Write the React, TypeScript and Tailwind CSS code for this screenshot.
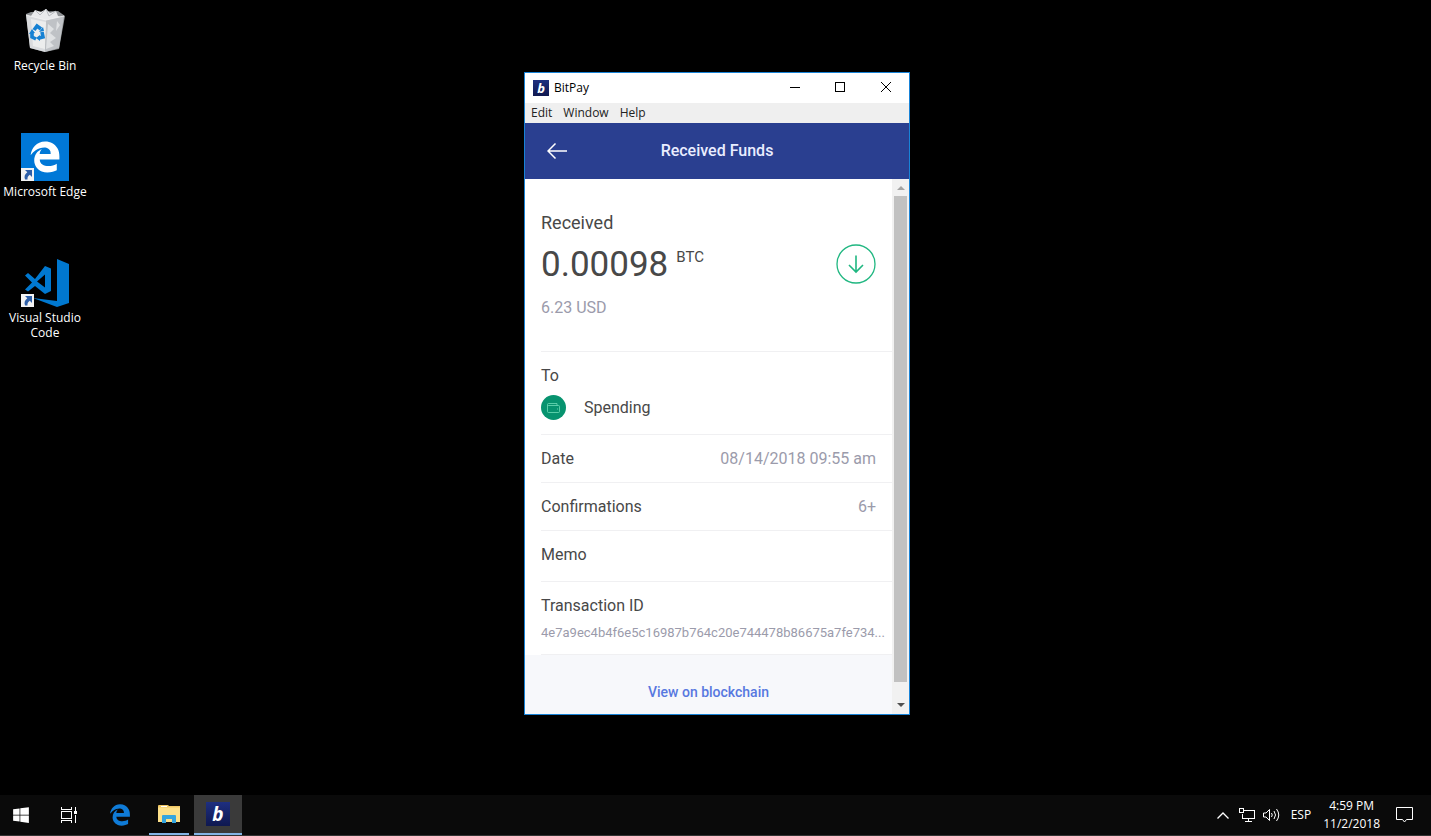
import type { ReactNode } from 'react'
import { FaEdgeLegacy, FaWindows } from 'react-icons/fa6'

const TX_ID = '4e7a9ec4b4f6e5c16987b764c20e744478b86675a7fe734...'

function RecycleBinIcon() {
  return (
    <svg viewBox="0 0 48 48" className="h-12 w-12" aria-hidden="true">
      <path d="M5 7l5-2 27-1 7 5-6 33-14 3-15-4z" fill="#8d9093" />
      <path d="M10 9l4-6 6 2 5-3 4 4 6-2 2 5 4 1-5 7H12z" fill="#e9eaec" />
      <path d="M14 3l5 5 6-6 3 7 7-5" fill="none" stroke="#b9bcc0" />
      <path d="M5 8l20 5-1 32-15-4z" fill="#d9dbde" />
      <path d="M25 13l18-4-5 32-14 4z" fill="#bfc2c6" />
      <path d="M10 12l15 3-1 27-12-3z" fill="#eceded" />
      <path d="M27 17l6 5-4 4 6 5-6 4 4 4-8 3zM36 14l3 4-4 6z" fill="#dfe1e3" />
      <path d="M5 8l20 5 18-4" fill="none" stroke="#f5f5f5" strokeWidth="0.8" />
      <g fill="none" stroke="#1681d3" strokeWidth="3.6">
        <path d="M13 23l3-4 4 3" />
        <path d="M21 25l1 5-4 1" />
        <path d="M15 32l-4-2 0-5" />
      </g>
      <path d="M18 25l5-1-1-4zM19 28v6l-4-3zM8 27l3-5 3 4z" fill="#1681d3" />
    </svg>
  )
}

function VsCodeIcon() {
  return (
    <svg viewBox="0 0 48 48" className="h-12 w-12" fill="#0078d0" aria-hidden="true">
      <path d="M36 0l12 5v39l-12 4-24-9 24 3z" />
      <path
        fillRule="evenodd"
        d="M24 7l6 2.500v22.500l-6 3-10-8-7 5.500-3-2 7-7-7-7 3-2.500 7 6zM24 15.500l-8 7 8 6z"
      />
    </svg>
  )
}

function EdgeTile() {
  return (
    <span className="flex h-12 w-12 items-center justify-center bg-[#0078d7]">
      <FaEdgeLegacy className="h-8 w-8 text-white" />
    </span>
  )
}

function ShortcutBadge() {
  return (
    <svg viewBox="0 0 13 13" className="absolute bottom-0 left-0 h-[13px] w-[13px]" aria-hidden="true">
      <path d="M0 0h13v13H0z" fill="#f3f3f3" />
      <path d="M4 2h7v7L8.800 6.800C7 8 6.300 9.300 6.500 11.500H4C2.800 8.500 4 6 6.300 4.300z" fill="#2e5fa8" />
    </svg>
  )
}

function DesktopIcon({ label, shortcut, children }: { label: string; shortcut?: boolean; children: ReactNode }) {
  return (
    <button type="button" className="flex h-[126px] flex-col items-center gap-[3px] text-white">
      <span className="relative block h-12 w-12">
        {children}
        {shortcut && <ShortcutBadge />}
      </span>
      <span className="text-[12px] leading-[15px]">{label}</span>
    </button>
  )
}

function WindowControls() {
  return (
    <div className="ml-auto flex h-full pb-[2px]">
      <button type="button" aria-label="Minimize" className="flex w-[44px] items-center justify-center">
        <svg viewBox="0 0 10 10" className="h-[10px] w-[10px]" stroke="#000" shapeRendering="crispEdges">
          <path d="M0 5.500h10" />
        </svg>
      </button>
      <button type="button" aria-label="Maximize" className="flex w-[46px] items-center justify-center">
        <svg viewBox="0 0 10 10" className="h-[10px] w-[10px]" stroke="#000" fill="none" shapeRendering="crispEdges">
          <path d="M.5.5h9v9h-9z" />
        </svg>
      </button>
      <button type="button" aria-label="Close" className="flex w-[46px] items-center justify-center">
        <svg viewBox="0 0 10 10" className="h-[10px] w-[10px]" stroke="#000">
          <path d="M0 0l10 10M10 0L0 10" />
        </svg>
      </button>
    </div>
  )
}

function ScrollBar() {
  return (
    <div className="flex w-[17px] shrink-0 flex-col items-center bg-[#f1f1f1]" aria-hidden="true">
      <span className="flex h-[17px] items-center">
        <svg viewBox="0 0 8 4" className="h-1 w-2" fill="#a3a3a3">
          <path d="M0 4l4-4 4 4z" />
        </svg>
      </span>
      <span className="w-[13px] flex-1 bg-[#c1c1c1]" />
      <span className="h-[14px]" />
      <span className="flex h-[18px] items-center">
        <svg viewBox="0 0 8 4" className="h-1 w-2" fill="#505050">
          <path d="M0 0l4 4 4-4z" />
        </svg>
      </span>
    </div>
  )
}

function Row({ label, value }: { label: string; value: string }) {
  return (
    <div className="ml-4 flex h-12 items-center justify-between border-b border-[#f0f0f2] pr-4">
      <dt>{label}</dt>
      <dd className="text-[#9b9bab]">{value}</dd>
    </div>
  )
}

function TransactionDetails() {
  return (
    <div className="flex min-w-0 flex-1 flex-col text-[16px] leading-6 text-[#484848]">
      <section className="ml-4 flex h-[173px] flex-col border-b border-[#f0f0f2] pt-8 pr-4">
        <h2 className="text-[18px] leading-6">Received</h2>
        <div className="flex h-[61px] items-start justify-between pt-2">
          <p className="flex items-start gap-2">
            <span className="text-[35px] leading-[44px]">0.00098</span>
            <span className="pt-[2px] text-[15px] leading-6">BTC</span>
          </p>
          <svg viewBox="0 0 40 40" className="mt-px h-10 w-10" fill="none" stroke="#20b781" aria-hidden="true">
            <circle cx="20" cy="20" r="19" strokeWidth="1.300" />
            <path d="M20 11.500v16M13 21l7 7 7-7" strokeWidth="1.600" />
          </svg>
        </div>
        <p className="text-[#9b9bab]">6.23 USD</p>
      </section>

      <dl>
        <div className="ml-4 flex h-[83px] flex-col gap-[7px] border-b border-[#f0f0f2] pt-3">
          <dt>To</dt>
          <dd className="flex items-center gap-[18px]">
            <span className="flex h-[25px] w-[25px] items-center justify-center rounded-full bg-[#07936f]">
              <svg viewBox="0 0 13 10" className="h-[10px] w-[13px]" fill="none" stroke="#6fdcb8" strokeWidth="0.800" aria-hidden="true">
                <path d="M.5 2v6.500q0 1 1 1h10q1 0 1-1v-5q0-1-1-1H1.500Q.5 2.500.5 1.500T1.500.5h8.500v2" />
                <path d="M10 6h.8" strokeWidth="1.200" />
              </svg>
            </span>
            Spending
          </dd>
        </div>
        <Row label="Date" value="08/14/2018 09:55 am" />
        <Row label="Confirmations" value="6+" />
        <div className="ml-4 h-[51px] border-b border-[#f0f0f2] pt-3">
          <dt>Memo</dt>
        </div>
        <div className="ml-4 h-[73px] border-b border-[#f0f0f2] pt-3">
          <dt>Transaction ID</dt>
          <dd className="pt-[3px] text-[13px] whitespace-nowrap text-[#9b9bab]">{TX_ID}</dd>
        </div>
      </dl>

      <div className="flex flex-1 items-start justify-center bg-[#f7f8fb] pt-[25px]">
        <a href="#blockchain" className="text-[14px] font-medium text-[#5878e0]">
          View on blockchain
        </a>
      </div>
    </div>
  )
}

function BitPayWindow() {
  return (
    <main className="absolute top-[72px] left-[524px] flex h-[643px] w-[386px] flex-col border border-[#1883d7] bg-white">
      <div className="flex h-[30px] items-center pl-2 text-[12px] text-black">
        <span className="flex h-4 w-4 items-center justify-center bg-linear-to-b from-[#1e2f80] to-[#0f1850] font-['Open_Sans'] text-[13px] leading-4 font-bold text-white italic">
          b
        </span>
        <span className="pl-[5px]">BitPay</span>
        <WindowControls />
      </div>
      <nav className="flex h-5 items-center gap-[11px] bg-[#efefef] pl-[6px] text-[12px] text-[#222]">
        <button type="button">Edit</button>
        <button type="button">Window</button>
        <button type="button">Help</button>
      </nav>
      <header className="grid h-14 grid-cols-[64px_1fr_64px] items-center bg-[#2a3f90] font-[Roboto] text-white">
        <button type="button" aria-label="Back" className="flex justify-center">
          <svg viewBox="0 0 20 16" className="h-4 w-5" fill="none" stroke="#fff" strokeWidth="1.500">
            <path d="M20 8H1M8.500.5L1 8l7.500 7.500" />
          </svg>
        </button>
        <h1 className="text-center text-[16px] font-medium text-[#e9edff]">Received Funds</h1>
      </header>
      <div className="flex min-h-0 flex-1 font-[Roboto]">
        <TransactionDetails />
        <ScrollBar />
      </div>
    </main>
  )
}

function Taskbar() {
  return (
    <footer className="flex h-[41px] border-b border-[#333] bg-[#0a0a0a] text-[12px] text-white">
      <button type="button" aria-label="Start" className="flex w-[42px] items-center justify-center">
        <FaWindows className="h-[18px] w-4" />
      </button>
      <button type="button" aria-label="Task View" className="flex w-[54px] items-center justify-center">
        <svg viewBox="0 0 17 16" className="h-4 w-[17px]" fill="none" stroke="#fff" shapeRendering="crispEdges">
          <path d="M.5 0v2.500h10V0M.5 16v-2.500h10V16M.5 4.500h10v7H.5zM14.500 0v4M14.500 8v8" />
          <path d="M13 4h3v3h-3z" fill="#fff" stroke="none" />
        </svg>
      </button>
      <div className="flex gap-px">
        <button type="button" aria-label="Microsoft Edge" className="flex w-12 items-center justify-center">
          <FaEdgeLegacy className="h-[22px] w-[22px] text-[#0f7bd7]" />
        </button>
        <button type="button" aria-label="File Explorer" className="flex w-12 items-center justify-center px-1">
          <span className="flex h-full w-10 items-center justify-center border-b-2 border-[#82b4e6]">
            <svg viewBox="0 0 22 18" className="h-[18px] w-[22px]" aria-hidden="true">
              <path d="M0 1q0-1 1-1h9l1 1h11v4H0z" fill="#f0c765" />
              <path d="M3 1.500h6" stroke="#fff" />
              <path d="M0 2.500h22V17H0z" fill="#fde08a" />
              <path d="M4 18v-7q0-1 1-1h12q1 0 1 1v7h-4v-4H8v4z" fill="#35a5df" />
            </svg>
          </span>
        </button>
        <button
          type="button"
          aria-label="BitPay"
          className="flex w-12 items-center justify-center border-b-2 border-[#82b4e6] bg-[#3a3a3a]"
        >
          <span className="flex h-6 w-6 items-center justify-center bg-linear-to-b from-[#1e2f80] to-[#0f1850] font-['Open_Sans'] text-[19px] leading-6 font-bold italic">
            b
          </span>
        </button>
      </div>

      <div className="ml-auto flex items-center pr-[18px]">
        <button type="button" aria-label="Show hidden icons">
          <svg viewBox="0 0 12 7" className="h-[7px] w-3" fill="none" stroke="#fff" strokeWidth="1.300">
            <path d="M.5 6.500L6 1l5.500 5.500" />
          </svg>
        </button>
        <button type="button" aria-label="Network" className="pl-[10px]">
          <svg viewBox="0 0 16 14" className="h-[14px] w-4" fill="none" stroke="#fff" shapeRendering="crispEdges">
            <path d="M5 2.500h10.500v8H3.500V6M.5.500h4v4h-4zM9.500 10.500v3M6 13.500h7" />
          </svg>
        </button>
        <button type="button" aria-label="Volume" className="pl-2">
          <svg viewBox="0 0 17 14" className="h-[14px] w-[17px]" fill="none" stroke="#fff">
            <path d="M.5 5h2.500l3.500-3.500v11L3 9H.5z" />
            <path d="M8.500 5q1.500 2 0 4M11 3q3 4 0 8M13.500 1q4.500 6 0 12" />
          </svg>
        </button>
        <button type="button" className="pl-[11px]">ESP</button>
        <time className="pl-3 text-center leading-[18px]">
          4:59 PM
          <br />
          11/2/2018
        </time>
        <button type="button" aria-label="Notifications" className="pl-4">
          <svg viewBox="0 0 17 16" className="h-4 w-[17px]" fill="none" stroke="#fff">
            <path d="M.5.500h16v12h-6l-2 2.500-2-2.500h-6z" />
          </svg>
        </button>
      </div>
    </footer>
  )
}

export default function App() {
  return (
    <div className="relative flex min-h-screen flex-col bg-black font-['Open_Sans',sans-serif]">
      <div className="flex w-[90px] flex-1 flex-col pt-[7px]">
        <DesktopIcon label="Recycle Bin">
          <RecycleBinIcon />
        </DesktopIcon>
        <DesktopIcon label="Microsoft Edge" shortcut>
          <EdgeTile />
        </DesktopIcon>
        <DesktopIcon label="Visual Studio Code" shortcut>
          <VsCodeIcon />
        </DesktopIcon>
      </div>
      <BitPayWindow />
      <Taskbar />
    </div>
  )
}
